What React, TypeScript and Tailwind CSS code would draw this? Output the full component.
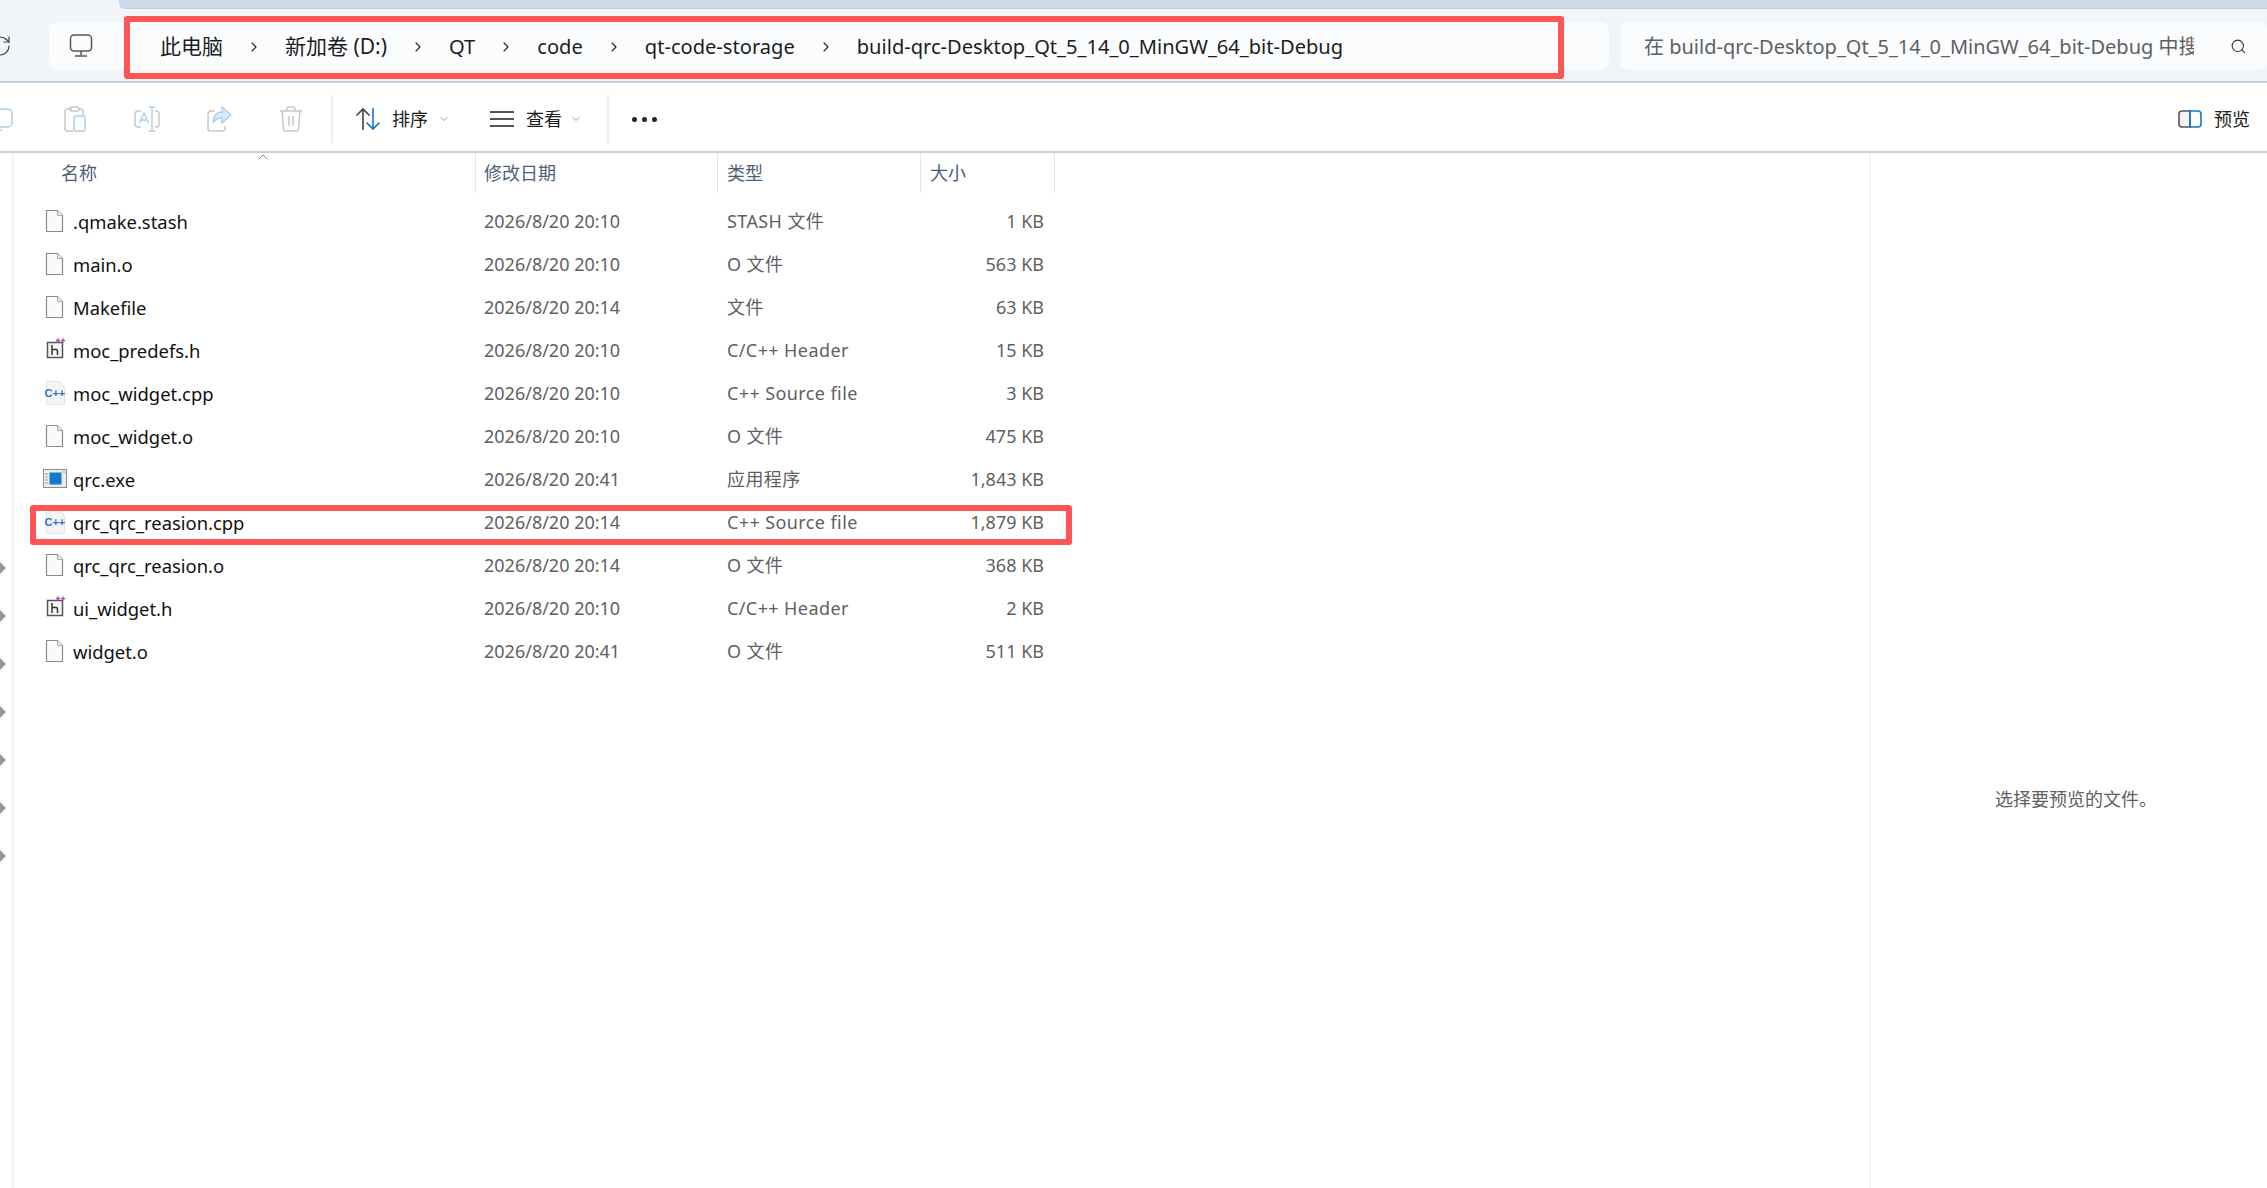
import { RotateCw, ChevronRight, ChevronDown, ChevronUp, Search } from 'lucide-react';

const crumbs = ['此电脑', '新加卷 (D:)', 'QT', 'code', 'qt-code-storage', 'build-qrc-Desktop_Qt_5_14_0_MinGW_64_bit-Debug'];

type Kind = 'blank' | 'header' | 'cpp' | 'exe';

const files: { name: string; date: string; type: string; size: string; kind: Kind; marked?: boolean }[] = [
  { name: '.qmake.stash', date: '2026/8/20 20:10', type: 'STASH 文件', size: '1 KB', kind: 'blank' },
  { name: 'main.o', date: '2026/8/20 20:10', type: 'O 文件', size: '563 KB', kind: 'blank' },
  { name: 'Makefile', date: '2026/8/20 20:14', type: '文件', size: '63 KB', kind: 'blank' },
  { name: 'moc_predefs.h', date: '2026/8/20 20:10', type: 'C/C++ Header', size: '15 KB', kind: 'header' },
  { name: 'moc_widget.cpp', date: '2026/8/20 20:10', type: 'C++ Source file', size: '3 KB', kind: 'cpp' },
  { name: 'moc_widget.o', date: '2026/8/20 20:10', type: 'O 文件', size: '475 KB', kind: 'blank' },
  { name: 'qrc.exe', date: '2026/8/20 20:41', type: '应用程序', size: '1,843 KB', kind: 'exe' },
  { name: 'qrc_qrc_reasion.cpp', date: '2026/8/20 20:14', type: 'C++ Source file', size: '1,879 KB', kind: 'cpp', marked: true },
  { name: 'qrc_qrc_reasion.o', date: '2026/8/20 20:14', type: 'O 文件', size: '368 KB', kind: 'blank' },
  { name: 'ui_widget.h', date: '2026/8/20 20:10', type: 'C/C++ Header', size: '2 KB', kind: 'header' },
  { name: 'widget.o', date: '2026/8/20 20:41', type: 'O 文件', size: '511 KB', kind: 'blank' },
];

function FileIcon({ kind }: { kind: Kind }) {
  if (kind === 'header') {
    return (
      <svg width="24" height="24" viewBox="0 0 24 24">
        <rect x="4.500" y="4.500" width="15" height="15" fill="#f6f6f6" stroke="#555" strokeWidth="1.500" />
        <path d="M9 7v10M9 11.500h4a1.500 1.500 0 0 1 1.500 1.500v4" fill="none" stroke="#333" strokeWidth="1.500" />
        <path d="M13 2.500h4M15 0.500v4M18 2.500h4M20 0.500v4" stroke="#a55aa8" strokeWidth="1.500" />
      </svg>
    );
  }
  if (kind === 'cpp') {
    return (
      <svg width="24" height="24" viewBox="0 0 24 24">
        <path d="M3.500 0.500h13l5 5v18h-18z" fill="#f3f3f3" stroke="#e4e4e4" />
        <text x="1.500" y="15.500" fontSize="11" fontWeight="700" fill="#2f74c0" fontFamily="'Liberation Sans', sans-serif">C++</text>
      </svg>
    );
  }
  if (kind === 'exe') {
    return (
      <svg width="24" height="20" viewBox="0 0 24 20">
        <rect x="0.500" y="0.500" width="23" height="18" fill="#ececec" stroke="#8c8c8c" />
        <rect x="6.500" y="3.500" width="12" height="12" fill="#1478cf" />
        <path d="M2 5h3M2 8h3M2 11h3M2 14h3M19.500 3h3" stroke="#a0a0a0" />
      </svg>
    );
  }
  return (
    <svg width="24" height="24" viewBox="0 0 24 24">
      <path d="M3.500 1.500h11l5 5v16h-16z" fill="#fafafa" stroke="#8a8a8a" strokeWidth="1.200" />
      <path d="M14.500 1.500v5h5" fill="#f0f0f0" stroke="#a8a8a8" />
    </svg>
  );
}

function ToolCell({ children }: { children: React.ReactNode }) {
  return <div className="w-[72px] flex items-center justify-center shrink-0">{children}</div>;
}

export default function App() {
  const sans = "font-['Noto_Sans','Noto_Sans_CJK_SC',sans-serif]";

  return (
    <div className={`w-[2267px] h-[1188px] overflow-hidden bg-white flex flex-col ${sans}`}>
      {/* address bar */}
      <header className="h-[83px] shrink-0 bg-[#f1f5f9] border-b-2 border-[#c2d0dc] flex flex-col">
        <div className="h-[9px] ml-[119px] bg-[#cddbe9] border-b border-[#c2d0dc] rounded-bl-md" />
        <div className="flex items-center h-[48px] mt-[13px]">
          <RotateCw className="w-[24px] h-[24px] -ml-[12px] text-[#444] shrink-0" strokeWidth={1.2} />
          <div className="relative ml-[37px] w-[1560px] h-full bg-[#fbfcfe] rounded-lg flex items-center">
            <svg className="ml-[20px] shrink-0" width="24" height="24" viewBox="0 0 24 24" fill="none" stroke="#555" strokeWidth="1.500">
              <rect x="1.500" y="1" width="21" height="16" rx="3.500" />
              <path d="M12 17v4M6 22h12" />
            </svg>
            <ol className="flex items-center ml-[67px] pt-[2px] text-[20.1px] text-[#1c1c1c] gap-[27px] whitespace-nowrap">
              {crumbs.map((c, i) => (
                <li key={c} className="flex items-center gap-[27px]">
                  {i > 0 && <ChevronRight className="w-[16px] h-[16px] -mx-[4px] text-[#222]" strokeWidth={1.6} />}
                  <span className={i < 2 ? 'text-[21px]' : ''}>{c}</span>
                </li>
              ))}
            </ol>
            <div className="absolute left-[75px] right-[45px] -top-[6px] -bottom-[9px] border-[6px] border-[#ff5555] rounded-[3px]" />
          </div>
          <div className="ml-[12px] flex-1 h-full bg-[#fbfcfe] rounded-lg flex items-center pl-[23px] pr-[20px]">
            <div className="w-[550px] pt-[2px] overflow-hidden whitespace-nowrap text-[20px] text-[#5f5f5f]">
              在 build-qrc-Desktop_Qt_5_14_0_MinGW_64_bit-Debug 中搜索
            </div>
            <Search className="ml-auto w-[17px] h-[17px] text-[#333]" strokeWidth={1.5} />
          </div>
        </div>
      </header>

      {/* command bar */}
      <div className="h-[70px] shrink-0 border-b-2 border-[#c2d0dc] flex items-center pt-[4px] text-[18px] text-[#1c1c1c] pr-[17px]">
        <div className="flex -ml-[33px]">
          <ToolCell>
            <svg width="22" height="24" viewBox="0 0 22 24" fill="none">
              <rect x="1" y="2" width="19" height="18" rx="4" fill="#fff" stroke="#a8d0f0" strokeWidth="1.500" />
              <path d="M-4 23h14" stroke="#c8c8c8" strokeWidth="1.500" />
            </svg>
          </ToolCell>
          <ToolCell>
            <svg width="22" height="26" viewBox="0 0 22 26" fill="none">
              <path d="M8 3H3a2 2 0 0 0-2 2v18a2 2 0 0 0 2 2h6M14 3h3a2 2 0 0 1 2 2v4" stroke="#c8c8c8" strokeWidth="1.500" />
              <rect x="6" y="1" width="9" height="4" rx="1.500" stroke="#c8c8c8" strokeWidth="1.500" />
              <rect x="10" y="10" width="11" height="15" rx="2" fill="#fff" stroke="#a8d0f0" strokeWidth="1.500" />
            </svg>
          </ToolCell>
          <ToolCell>
            <svg width="26" height="26" viewBox="0 0 26 26" fill="none">
              <path d="M7 5H4a3 3 0 0 0-3 3v10a3 3 0 0 0 3 3h3M21 5h1a3 3 0 0 1 3 3v10a3 3 0 0 1-3 3h-1" stroke="#c8c8c8" strokeWidth="1.500" />
              <path d="M15 1h6M15 25h6M18 1v24M5.500 17 10 7l4.500 10M7 14h6" stroke="#a8d0f0" strokeWidth="1.400" />
            </svg>
          </ToolCell>
          <ToolCell>
            <svg width="25" height="26" viewBox="0 0 25 26" fill="none">
              <path d="M8 5H4a3 3 0 0 0-3 3v14a3 3 0 0 0 3 3h11a3 3 0 0 0 3-3v-2" stroke="#c8c8c8" strokeWidth="1.500" />
              <path d="M15 1l9 8-9 8v-5c-4 0-7 1-9 5 0-6 3-11 9-11z" fill="#dcebf8" stroke="#a8d0f0" strokeWidth="1.400" />
            </svg>
          </ToolCell>
          <ToolCell>
            <svg width="24" height="26" viewBox="0 0 24 26" fill="none" stroke="#c8c8c8" strokeWidth="1.500">
              <path d="M1 5h22M8 5V3a2 2 0 0 1 2-2h4a2 2 0 0 1 2 2v2M3 5l1.500 18a2 2 0 0 0 2 2h11a2 2 0 0 0 2-2L21 5M10 10v10M14 10v10" />
            </svg>
          </ToolCell>
        </div>
        <div className="ml-[4px] w-[2px] h-[48px] bg-[#ededed]" />
        <svg className="ml-[22px] shrink-0" width="26" height="26" viewBox="0 0 26 26" fill="none" strokeWidth="1.600">
          <path d="M8 24V3M1.500 9.500 8 3l6.500 6.500" stroke="#444" />
          <path d="M18 2v21M11.500 16.500 18 23l6.500-6.500" stroke="#0f78d4" />
        </svg>
        <span className="ml-[11px]">排序</span>
        <ChevronDown className="ml-[10px] w-[12px] h-[12px] text-[#777]" strokeWidth={1.5} />
        <svg className="ml-[40px] shrink-0" width="24" height="20" viewBox="0 0 24 20" stroke="#555" strokeWidth="2">
          <path d="M0 3h24M0 10h24M0 17h24" />
        </svg>
        <span className="ml-[12px]">查看</span>
        <ChevronDown className="ml-[8px] w-[12px] h-[12px] text-[#777]" strokeWidth={1.5} />
        <div className="ml-[25px] w-[2px] h-[48px] bg-[#ededed]" />
        <div className="ml-[23px] flex gap-[5px]">
          <span className="w-[5px] h-[5px] rounded-full bg-[#222]" />
          <span className="w-[5px] h-[5px] rounded-full bg-[#222]" />
          <span className="w-[5px] h-[5px] rounded-full bg-[#222]" />
        </div>
        <svg className="ml-auto shrink-0" width="24" height="18" viewBox="0 0 24 18" fill="none" strokeWidth="1.600">
          <path d="M12 1H4a3 3 0 0 0-3 3v10a3 3 0 0 0 3 3h8z" fill="#f4f4f4" stroke="#555" />
          <path d="M12 1h8a3 3 0 0 1 3 3v10a3 3 0 0 1-3 3h-8z" stroke="#0f78d4" />
        </svg>
        <span className="ml-[12px]">预览</span>
      </div>

      <div className="flex-1 flex min-h-0">
        {/* nav pane edge */}
        <aside className="w-[14px] shrink-0 border-r-2 border-[#f3f3f3] pt-[391px]">
          {[0, 1, 2, 3, 4, 5, 6].map((i) => (
            <div key={i} className="h-[48px] flex items-center">
              <svg width="6" height="12" viewBox="0 0 6 12">
                <path d="M0 0l6 6-6 6z" fill="#8e9aa3" />
              </svg>
            </div>
          ))}
        </aside>

        {/* file list */}
        <main className="relative flex-1">
          <div className="grid grid-cols-[461px_242px_203px_135px] h-[40px] text-[18px] text-[#4c607a]">
            <div className="relative pl-[47px] flex items-center">
              名称
              <ChevronUp className="absolute left-[241px] -top-[4px] w-[16px] h-[16px] text-[#666]" strokeWidth={1.2} />
            </div>
            <div className="border-l border-[#e5e5e5] pl-[8px] flex items-center">修改日期</div>
            <div className="border-l border-[#e5e5e5] pl-[9px] flex items-center">类型</div>
            <div className="border-l border-r border-[#e5e5e5] pl-[9px] flex items-center">大小</div>
          </div>
          <div className="pt-[7px]">
            {files.map((f) => (
              <div key={f.name} className="relative grid grid-cols-[461px_242px_203px_135px] h-[43px] items-center text-[18px] text-[#5f5f5f]">
                <div className="flex items-center pl-[29px] text-[18.4px] text-[#111]">
                  <span className="w-[30px] h-[24px] flex items-center justify-start shrink-0">
                    <FileIcon kind={f.kind} />
                  </span>
                  {f.name}
                </div>
                <div className="pl-[9px]">{f.date}</div>
                <div className="pl-[10px] tracking-[0.4px]">{f.type}</div>
                <div className="pr-[11px] text-right">{f.size}</div>
                {f.marked && (
                  <div className="absolute left-[16px] w-[1042px] top-[4px] -bottom-[1px] border-[6px] border-[#ff5555] rounded-[3px]" />
                )}
              </div>
            ))}
          </div>
        </main>

        {/* preview pane */}
        <aside className="w-[398px] shrink-0 border-l-2 border-[#f5f5f5] pt-[633px] pl-[124px] text-[18px] text-[#5f5f5f]">
          选择要预览的文件。
        </aside>
      </div>
    </div>
  );
}
